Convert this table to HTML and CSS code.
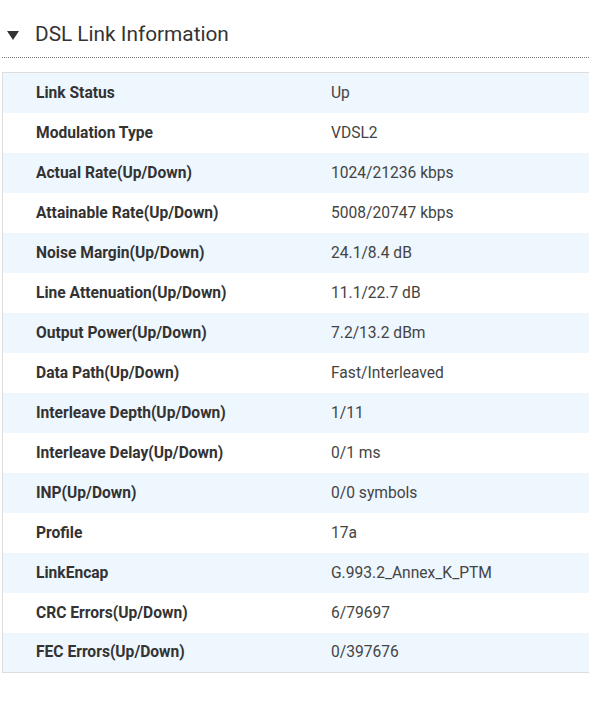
FILE: index.html
```html
<!DOCTYPE html>
<html>
<head>
<meta charset="utf-8">
<link rel="stylesheet" href="styles.css">
</head>
<body>
<div class="page">
  <div class="header">
    <span class="caret"></span>
    <h2 class="title">DSL Link Information</h2>
  </div>
  <table class="info">
    <tr><td class="k">Link Status</td><td class="v">Up</td></tr>
    <tr><td class="k">Modulation Type</td><td class="v">VDSL2</td></tr>
    <tr><td class="k">Actual Rate(Up/Down)</td><td class="v">1024/21236 kbps</td></tr>
    <tr><td class="k">Attainable Rate(Up/Down)</td><td class="v">5008/20747 kbps</td></tr>
    <tr><td class="k">Noise Margin(Up/Down)</td><td class="v">24.1/8.4 dB</td></tr>
    <tr><td class="k">Line Attenuation(Up/Down)</td><td class="v">11.1/22.7 dB</td></tr>
    <tr><td class="k">Output Power(Up/Down)</td><td class="v">7.2/13.2 dBm</td></tr>
    <tr><td class="k">Data Path(Up/Down)</td><td class="v">Fast/Interleaved</td></tr>
    <tr><td class="k">Interleave Depth(Up/Down)</td><td class="v">1/11</td></tr>
    <tr><td class="k">Interleave Delay(Up/Down)</td><td class="v">0/1 ms</td></tr>
    <tr><td class="k">INP(Up/Down)</td><td class="v">0/0 symbols</td></tr>
    <tr><td class="k">Profile</td><td class="v">17a</td></tr>
    <tr><td class="k">LinkEncap</td><td class="v">G.993.2_Annex_K_PTM</td></tr>
    <tr><td class="k">CRC Errors(Up/Down)</td><td class="v">6/79697</td></tr>
    <tr><td class="k">FEC Errors(Up/Down)</td><td class="v">0/397676</td></tr>
  </table>
</div>
</body>
</html>
```
FILE: styles.css
```css
html, body {
  margin: 0;
  padding: 0;
  background: #fff;
}
body {
  font-family: Roboto, "Liberation Sans", sans-serif;
  color: #333;
}
.page {
  padding: 0 0 0 2px;
}
.header {
  display: flex;
  align-items: center;
  height: 58px;
  border-bottom: 1px dotted #777;
  box-sizing: border-box;
  padding-top: 11px;
}
.caret {
  width: 0;
  height: 0;
  border-left: 6px solid transparent;
  border-right: 6px solid transparent;
  border-top: 9px solid #333;
  margin-left: 5px;
  margin-right: 16px;
  margin-top: 3px;
}
.title {
  margin: 0;
  font-size: 20.8px;
  font-weight: 400;
  color: #333;
}
.info {
  margin-top: 14px;
  border-collapse: collapse;
  width: 100%;
  border: 1px solid #ddd;
  border-right: none;
}
.info tr {
  height: 40px;
}
.info tr:nth-child(odd) {
  background: #eef6fe;
}
.info td {
  padding: 0;
  font-size: 15.6px;
  vertical-align: middle;
}
.info td.k {
  width: 295px;
  padding-left: 33px;
  font-weight: 700;
  color: #333;
}
.info td.v {
  color: #444;
}
```
